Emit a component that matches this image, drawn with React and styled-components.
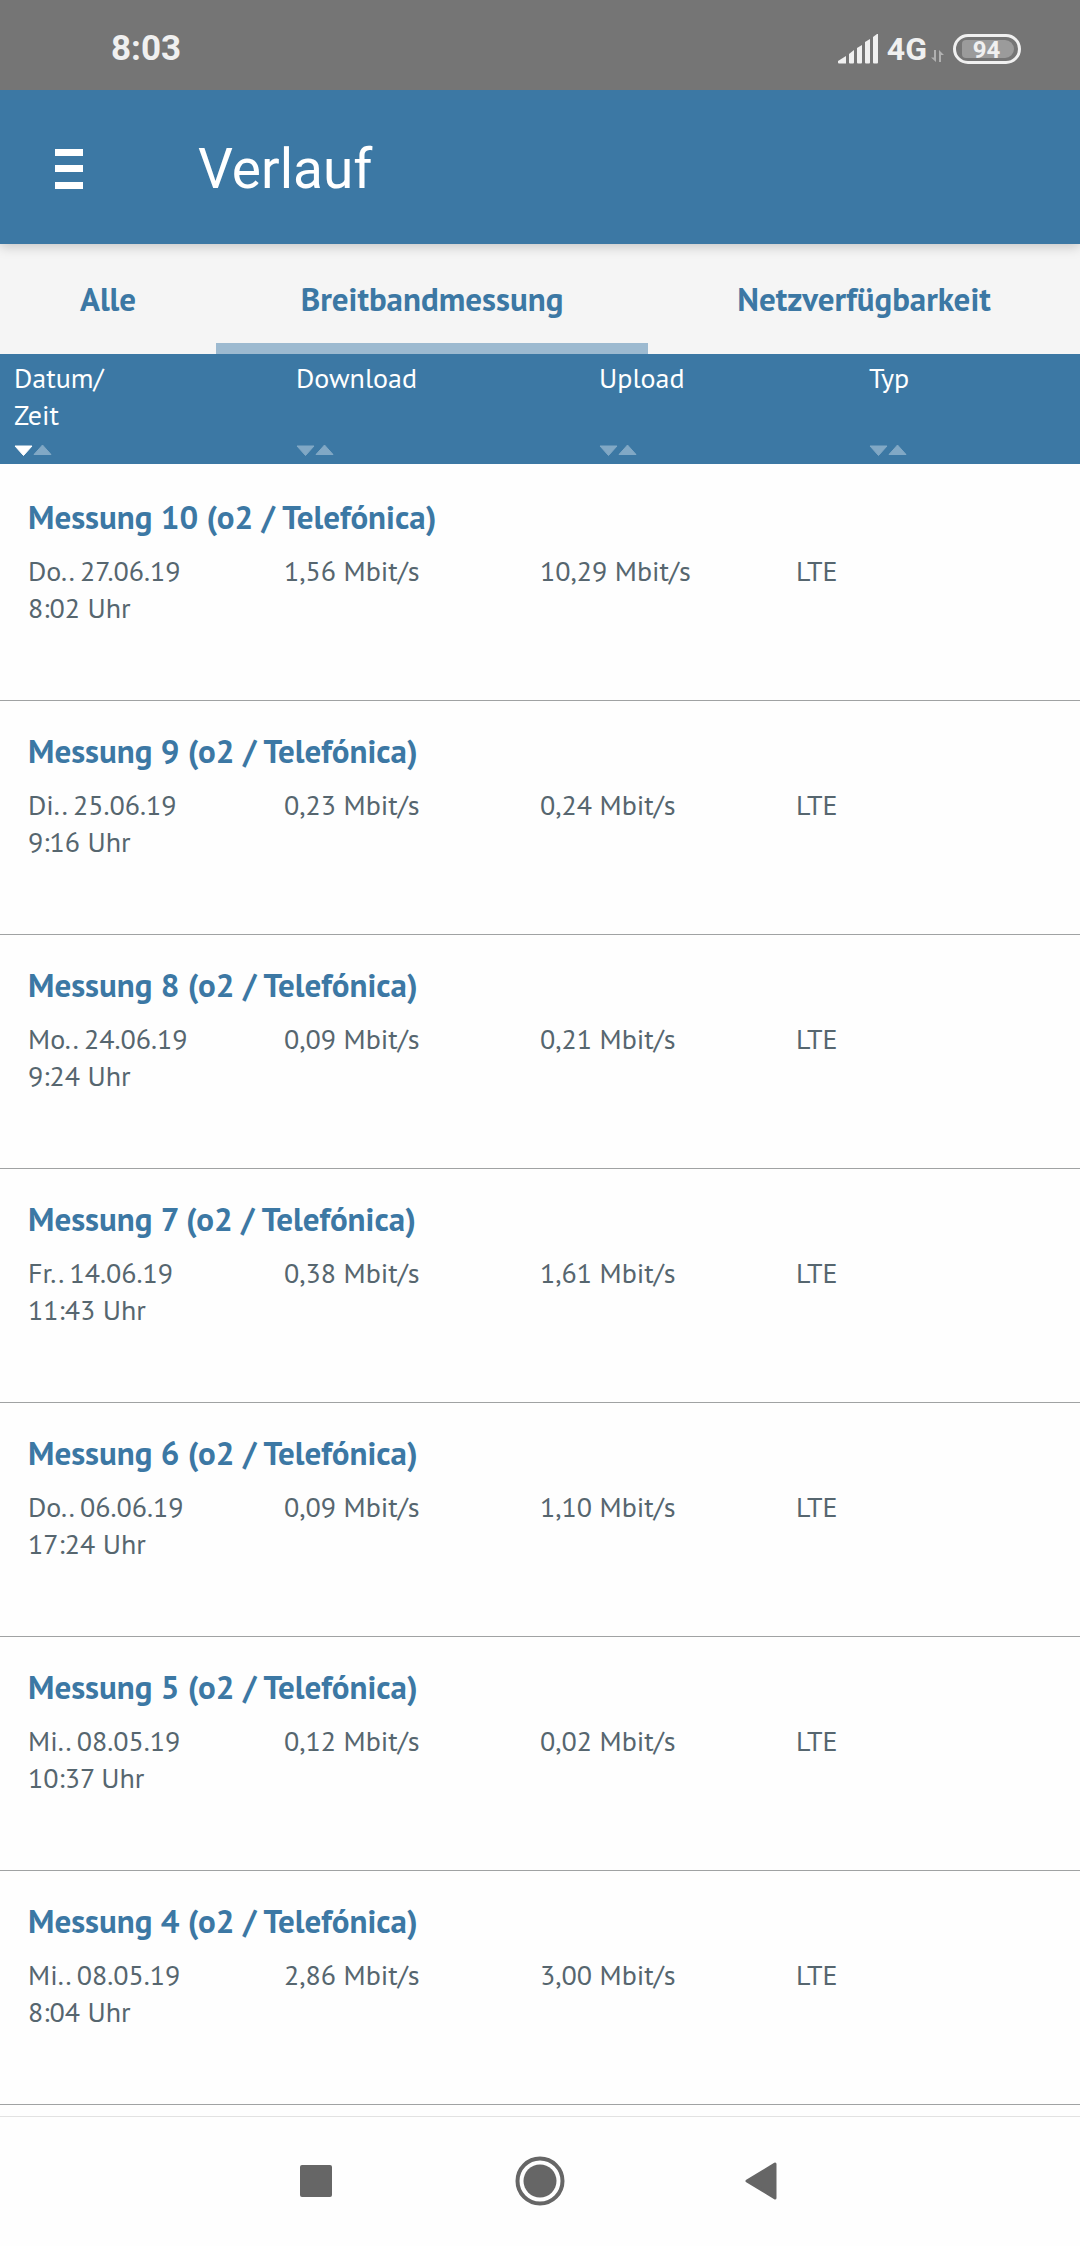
import React, { useState } from "react";
import styled, { createGlobalStyle } from "styled-components";

const blue = "#3c78a4";

const GlobalStyle = createGlobalStyle`
  * {
    box-sizing: border-box;
  }
  body {
    margin: 0;
    background: #fefefe;
    font-family: "PT Sans", Lato, sans-serif;
  }
  button {
    margin: 0;
    padding: 0;
    border: 0;
    background: none;
    font: inherit;
    color: inherit;
    cursor: pointer;
  }
`;

const Page = styled.div`
  min-height: 100vh;
  display: flex;
  flex-direction: column;
`;

const StatusBar = styled.div`
  height: 90px;
  padding: 7px 59px 0 111px;
  display: flex;
  align-items: center;
  justify-content: space-between;
  background: #757575;
  color: #f0f0f0;
  font-family: Roboto, sans-serif;
  font-size: 35px;
  font-weight: 700;
  position: relative;
  z-index: 2;
`;

const StatusIcons = styled.div`
  display: flex;
  align-items: center;
`;

const Network = styled.span`
  margin: 0 4px 0 8px;
  font-size: 32px;
`;

const DataArrows = styled.svg`
  margin: 14px 9px 0 0;
`;

const Battery = styled.div`
  width: 68px;
  height: 30px;
  padding: 3px 4px 3px 6px;
  border: 3px solid #f0f0f0;
  border-radius: 15px;
`;

const Charge = styled.div`
  height: 18px;
  padding-right: 3px;
  border-radius: 4px 9px 9px 4px;
  background: #9b9b9b;
  font-size: 24px;
  line-height: 20px;
  text-align: center;
`;

const AppBar = styled.header`
  height: 154px;
  padding: 4px 55px 0;
  display: flex;
  align-items: center;
  gap: 115px;
  background: ${blue};
  color: #fff;
  box-shadow: 0 2px 12px rgba(0, 0, 0, 0.22);
  position: relative;
  z-index: 1;
`;

const MenuButton = styled.button`
  display: flex;
`;

const Title = styled.h1`
  margin: 0;
  font-family: Roboto, sans-serif;
  font-size: 55px;
  font-weight: 400;
  line-height: 66px;
`;

const Tabs = styled.nav`
  height: 110px;
  display: flex;
  background: #f5f5f5;
`;

const Tab = styled.button`
  flex: ${(props) => props.$grow} 1 0;
  && {
    padding-top: 10px;
    border-bottom: 11px solid
      ${(props) => (props.$active ? "#9dbad0" : "transparent")};
    color: ${blue};
    font-size: 33px;
    font-weight: 700;
  }
`;

const Table = styled.table`
  flex: 1;
  display: block;
  font-size: 28px;
  line-height: 37px;

  thead,
  tbody {
    display: block;
  }
  th,
  td {
    padding: 0;
    text-align: left;
    font-weight: 400;
  }
`;

const HeadRow = styled.tr`
  height: 110px;
  padding: 5px 0 7px 14px;
  display: grid;
  grid-template-columns: 282fr 303fr 270fr 211fr;
  background: ${blue};
  color: #fff;
`;

const HeadCell = styled.th`
  display: flex;
`;

const SortButton = styled.button`
  display: flex;
  flex-direction: column;
  justify-content: space-between;
  && {
    text-align: left;
  }
`;

const Measurement = styled.tbody`
  padding: 30px 28px 74px;
  border-bottom: 1px solid #a0a2a3;
  color: #56666f;

  thead + & {
    margin-top: 3px;
  }
`;

const NameRow = styled.tr`
  display: block;
  margin-bottom: 15px;
`;

const Name = styled.th`
  display: block;
  && {
    color: ${blue};
    font-size: 33px;
    font-weight: 700;
    line-height: 40px;
  }
`;

const ValueRow = styled.tr`
  display: grid;
  grid-template-columns: repeat(4, 1fr);
`;

const Value = styled.td`
  display: block;
`;

const SystemNav = styled.footer`
  height: 130px;
  padding-bottom: 2px;
  display: flex;
  justify-content: center;
  border-top: 1px solid #e2e2e2;
`;

const SystemButton = styled.button`
  width: 224px;
  display: flex;
  align-items: center;
  justify-content: center;
`;

const tabs = [
  { label: "Alle", grow: 1 },
  { label: "Breitbandmessung", grow: 2 },
  { label: "Netzverfügbarkeit", grow: 2 },
];

const columns = [
  { key: "date", lines: ["Datum/", "Zeit"] },
  { key: "download", lines: ["Download"] },
  { key: "upload", lines: ["Upload"] },
  { key: "type", lines: ["Typ"] },
];

const measurements = [
  { id: 10, date: "Do.. 27.06.19", time: "8:02", down: "1,56", up: "10,29" },
  { id: 9, date: "Di.. 25.06.19", time: "9:16", down: "0,23", up: "0,24" },
  { id: 8, date: "Mo.. 24.06.19", time: "9:24", down: "0,09", up: "0,21" },
  { id: 7, date: "Fr.. 14.06.19", time: "11:43", down: "0,38", up: "1,61" },
  { id: 6, date: "Do.. 06.06.19", time: "17:24", down: "0,09", up: "1,10" },
  { id: 5, date: "Mi.. 08.05.19", time: "10:37", down: "0,12", up: "0,02" },
  { id: 4, date: "Mi.. 08.05.19", time: "8:04", down: "2,86", up: "3,00" },
];

function SortArrows({ active }) {
  return (
    <svg width="38" height="13" viewBox="0 0 38 13" strokeLinejoin="round">
      <path
        d="M1 2h17L9.500 11.500z"
        fill={active ? "#fff" : "#81a8c5"}
        stroke={active ? "#fff" : "#81a8c5"}
      />
      <path d="M20 10.500h17L28.500 1z" fill="#81a8c5" stroke="#81a8c5" />
    </svg>
  );
}

export default function App() {
  const [tab, setTab] = useState("Breitbandmessung");
  const [sortBy, setSortBy] = useState("date");

  return (
    <Page>
      <GlobalStyle />
      <StatusBar>
        <span>8:03</span>
        <StatusIcons>
          {/* Signal strength */}
          <svg width="41" height="30" viewBox="0 0 41 30" fill="#f0f0f0">
            <path d="M0 27l8-5v7.500H1q-1 0-1-1z" />
            <path d="M11 20l5-4v12.500q0 1-1 1h-3q-1 0-1-1z" />
            <path d="M19 14l5-3v17.500q0 1-1 1h-3q-1 0-1-1z" />
            <path d="M27 8l5-3v23.500q0 1-1 1h-3q-1 0-1-1z" />
            <path d="M35 3l4-3h1v28.500q0 1-1 1h-3q-1 0-1-1z" />
          </svg>
          <Network>4G</Network>
          <DataArrows width="13" height="12" viewBox="0 0 13 12" fill="#b0b0b0">
            <path d="M3 0h2v12L0 7.500h3zM8 12h2V5h3L8 0z" />
          </DataArrows>
          <Battery>
            <Charge>94</Charge>
          </Battery>
        </StatusIcons>
      </StatusBar>

      <AppBar>
        <MenuButton aria-label="Menü">
          <svg width="28" height="40" viewBox="0 0 28 40" fill="#fff">
            <path d="M0 0h28v7H0zM0 16h28v7H0zM0 33h28v7H0z" />
          </svg>
        </MenuButton>
        <Title>Verlauf</Title>
      </AppBar>

      <Tabs>
        {tabs.map(({ label, grow }) => (
          <Tab
            key={label}
            $grow={grow}
            $active={tab === label}
            onClick={() => setTab(label)}
          >
            {label}
          </Tab>
        ))}
      </Tabs>

      <Table>
        <thead>
          <HeadRow>
            {columns.map(({ key, lines }) => (
              <HeadCell key={key} scope="col">
                <SortButton onClick={() => setSortBy(key)}>
                  <span>
                    {lines[0]}
                    {lines[1] && <br />}
                    {lines[1]}
                  </span>
                  <SortArrows active={sortBy === key} />
                </SortButton>
              </HeadCell>
            ))}
          </HeadRow>
        </thead>
        {measurements.map((item) => (
          <Measurement key={item.id}>
            <NameRow>
              <Name colSpan="4">Messung {item.id} (o2 / Telefónica)</Name>
            </NameRow>
            <ValueRow>
              <Value>
                {item.date}
                <br />
                {item.time} Uhr
              </Value>
              <Value>{item.down} Mbit/s</Value>
              <Value>{item.up} Mbit/s</Value>
              <Value>LTE</Value>
            </ValueRow>
          </Measurement>
        ))}
      </Table>

      {/* System buttons */}
      <SystemNav>
        <SystemButton aria-label="Übersicht">
          <svg width="32" height="32" viewBox="0 0 32 32">
            <rect width="32" height="32" rx="2" fill="#666" />
          </svg>
        </SystemButton>
        <SystemButton aria-label="Startseite">
          <svg width="50" height="50" viewBox="0 0 50 50">
            <circle cx="25" cy="25" r="22.500" fill="none" stroke="#666" strokeWidth="4" />
            <circle cx="25" cy="25" r="16.500" fill="#666" />
          </svg>
        </SystemButton>
        <SystemButton aria-label="Zurück">
          <svg width="40" height="38" viewBox="0 0 40 38">
            <path
              d="M3 19L31 2v34z"
              fill="#666"
              stroke="#666"
              strokeWidth="3"
              strokeLinejoin="round"
            />
          </svg>
        </SystemButton>
      </SystemNav>
    </Page>
  );
}
